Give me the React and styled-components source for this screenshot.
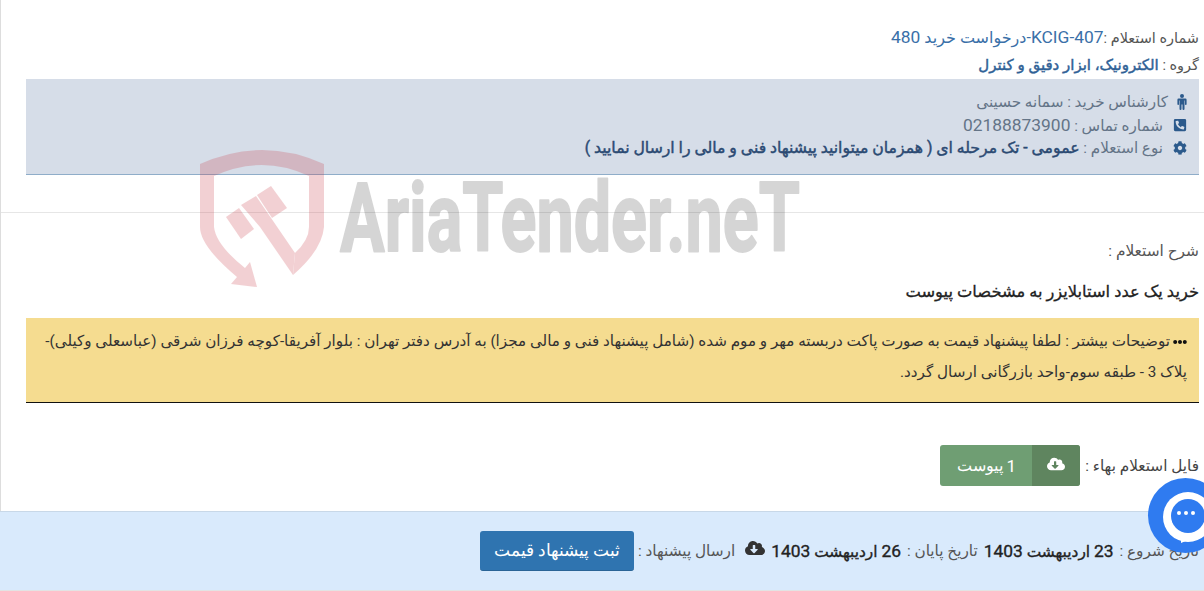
import React from "react";
import styled, { createGlobalStyle } from "styled-components";
import { FaPhoneSquareAlt, FaCog, FaEllipsisH, FaCloudDownloadAlt } from "react-icons/fa";

const Global = createGlobalStyle`
  html, body { margin: 0; padding: 0; background: #fff; }
  body { font-family: Roboto, "Noto Sans", "DejaVu Sans", sans-serif; color: #333; font-size: 14px; }
`;

const Page = styled.div`
  position: relative;
  width: 1204px;
  height: 591px;
  overflow: hidden;
  direction: rtl;
  box-sizing: border-box;
`;

const Upper = styled.div`
  height: 511px;
  box-sizing: border-box;
  border-left: 1px solid #ddd;
  padding-top: 23px;
  display: flex;
  flex-direction: column;
`;

const Section = styled.div`
  padding: 0 5px 0 0;
  margin-left: 25px;
`;

const TitleRow = styled.div`
  height: ${(p) => p.$h || 29}px;
  line-height: ${(p) => (p.$h || 29) - 1}px;
  font-size: 14.5px;
  color: #555;
  white-space: nowrap;
`;

const TitleLink = styled.span`
  font-size: 16px;
  color: #3a70a8;
`;

const Num = styled.span`
  font-size: ${(p) => p.$size || 17.4}px;
  font-weight: ${(p) => p.$weight || 400};
`;

const GroupLink = styled.span`
  font-size: 15px;
  color: #2f6196;
  -webkit-text-stroke: 0.45px #2f6196;
`;

const Band = styled.div`
  height: 96px;
  background: #d6dde8;
  border-bottom: 1px solid #8fadc9;
  box-sizing: border-box;
  padding: 11px 12px 0 0;
`;

const InfoRow = styled.div`
  display: flex;
  align-items: center;
  gap: ${(p) => p.$gap || 10}px;
  height: 23px;
  font-size: 15.2px;
  color: #647487;
  white-space: nowrap;
  svg { color: #2c5a8c; width: 14px; height: 14px; flex: none; }
`;

const Strong = styled.span`
  font-size: 15.7px;
  color: #2b4a73;
  -webkit-text-stroke: 0.45px #2b4a73;
`;

const Rule = styled.hr`
  margin: 37px 0 0;
  border: 0;
  border-top: 1px solid #e6e6e6;
`;

const DescLabel = styled.div`
  margin-top: 28px;
  padding-right: 5px;
  font-size: 15.4px;
  line-height: 20px;
  color: #555;
`;

const DescTitle = styled.div`
  margin-top: 21px;
  padding-right: 5px;
  font-size: 16.3px;
  line-height: 20px;
  color: #222;
  -webkit-text-stroke: 0.3px #222;
`;

const Note = styled.div`
  margin-top: 16px;
  height: 85px;
  box-sizing: border-box;
  background: #f5dc90;
  border-bottom: 1px solid #111;
  padding: 8px 12px 0 12px;
  font-size: 15.2px;
  line-height: 31px;
  color: #333;
  svg { width: 14px; height: 14px; vertical-align: -3px; margin-left: 3px; color: #111; }
`;

const FileRow = styled.div`
  display: flex;
  align-items: center;
  gap: 5px;
  margin-top: 42px;
  padding-right: 5px;
  font-size: 15.3px;
  color: #444;
`;

const AttachButton = styled.button`
  display: flex;
  align-items: stretch;
  direction: rtl;
  width: 140px;
  height: 41px;
  padding: 0;
  border: 0;
  border-radius: 3px;
  overflow: hidden;
  background: #6f9e73;
  color: #fff;
  font: 400 16px Roboto, "Noto Sans", sans-serif;
`;

const AttachIcon = styled.span`
  display: flex;
  align-items: center;
  justify-content: center;
  width: 48px;
  background: #5f855f;
  svg { width: 18px; height: 18px; margin-top: -4px; }
`;

const AttachText = styled.span`
  flex: 1;
  display: flex;
  align-items: center;
  justify-content: center;
`;

const Footer = styled.div`
  height: 80px;
  box-sizing: border-box;
  background: #d9eafc;
  border-top: 1px solid #c8d8e8;
  border-bottom: 1px solid #e3e3e3;
  display: flex;
  align-items: center;
  gap: 6px;
  padding: 0 5px 0 0;
  font-size: 15.3px;
  color: #555;
  white-space: nowrap;
`;

const FooterDate = styled.span`
  font-size: 15.4px;
  color: #222;
  -webkit-text-stroke: 0.35px #222;
`;

const Cloud = styled(FaCloudDownloadAlt)`
  width: 20px;
  height: 20px;
  color: #333;
  margin-left: 4px;
  margin-top: -6px;
`;

const SubmitButton = styled.button`
  height: 40px;
  width: 154px;
  margin-right: -2px;
  border: 0;
  border-bottom: 1px solid #2a6496;
  border-radius: 3px;
  background: #2f74b0;
  color: #fff;
  font: 400 16.6px Roboto, "Noto Sans", sans-serif;
`;

const Watermark = styled.svg`
  position: absolute;
  left: 195px;
  top: 145px;
  width: 820px;
  height: 150px;
  pointer-events: none;
  direction: ltr;
`;

const WatermarkWord = styled.text`
  font-family: Roboto, sans-serif;
  font-weight: 700;
  font-size: 96px;
  fill: #000;
  stroke: #000;
  stroke-width: 2px;
  stroke-linejoin: round;
  opacity: 0.16;
`;

const Chat = styled.div`
  position: absolute;
  left: 1148px;
  top: 478px;
  width: 75px;
  height: 75px;
  border-radius: 50%;
  background: #2f7bf0;
`;

const ChatGlyph = styled.svg`
  display: block;
  width: 75px;
  height: 75px;
`;

const Male = (
  <svg viewBox="0 0 10 16" style={{ width: 10, height: 16 }} fill="currentColor">
    <circle cx="5" cy="2" r="2" />
    <path d="M1.6 4.6h6.8a1.2 1.2 0 0 1 1.2 1.2v4.4a.8.8 0 0 1-1.6 0V6.6h-.5V15a1 1 0 0 1-2 0v-4.6h-1V15a1 1 0 0 1-2 0V6.6H2v3.6a.8.8 0 0 1-1.6 0V5.8a1.2 1.2 0 0 1 1.2-1.2z" />
  </svg>
);

export default function App() {
  return (
    <Page>
      <Global />
      <Upper>
        <Section>
          <TitleRow>
            شماره استعلام :<TitleLink><Num>KCIG-407</Num>-درخواست خرید <Num>480</Num></TitleLink>
          </TitleRow>
          <TitleRow $h={27}>
            گروه : <GroupLink>الکترونیک، ابزار دقیق و کنترل</GroupLink>
          </TitleRow>
          <Band>
            <InfoRow $gap={9}>{Male}<span>کارشناس خرید : سمانه حسینی</span></InfoRow>
            <InfoRow><FaPhoneSquareAlt /><span>شماره تماس : <Num>02188873900</Num></span></InfoRow>
            <InfoRow><FaCog /><span>نوع استعلام : <Strong>عمومی - تک مرحله ای ( همزمان میتوانید پیشنهاد فنی و مالی را ارسال نمایید )</Strong></span></InfoRow>
          </Band>
        </Section>
        <Rule />
        <DescLabel>شرح استعلام :</DescLabel>
        <DescTitle>خرید یک عدد استابلایزر به مشخصات پیوست</DescTitle>
        <Section>
          <Note>
            <FaEllipsisH />
            توضیحات بیشتر : لطفا پیشنهاد قیمت به صورت پاکت دربسته مهر و موم شده (شامل پیشنهاد فنی و مالی مجزا) به آدرس دفتر تهران : بلوار آفریقا-کوچه فرزان شرقی (عباسعلی وکیلی)- پلاک 3 - طبقه سوم-واحد بازرگانی ارسال گردد.
          </Note>
        </Section>
        <FileRow>
          <span>فایل استعلام بهاء :</span>
          <AttachButton>
            <AttachIcon><FaCloudDownloadAlt /></AttachIcon>
            <AttachText><Num $size={17}>1</Num>&nbsp;پیوست</AttachText>
          </AttachButton>
        </FileRow>
      </Upper>
      <Footer>
        <span>تاریخ شروع :</span>
        <FooterDate><Num>23</Num> اردیبهشت <Num>1403</Num></FooterDate>
        <span>تاریخ پایان :</span>
        <FooterDate><Num>26</Num> اردیبهشت <Num>1403</Num></FooterDate>
        <Cloud />
        <span>ارسال پیشنهاد :</span>
        <SubmitButton>ثبت پیشنهاد قیمت</SubmitButton>
      </Footer>
      <Watermark viewBox="195 145 820 150">
        <g fill="#c8303c" opacity="0.22">
          <path fillRule="evenodd" d="M200 164 Q262 136 324 164 V227 Q322 250 293 275 L295 253 Q309 240 309 227 V176 Q262 154 214 176 V227 Q216 245 245 268 L250 262 L257 287 L231 284 L237 277 Q200 246 200 227 Z" />
          <path d="M241 205 L256 196 L295 253 L293 275 L260 227 Z" />
          <path d="M226 217 L239 208 L254 229 L241 239 Z" />
          <path d="M271 186 L287 208 L272 218 L257 195 Z" />
        </g>
        <WatermarkWord x="340" y="251" textLength="460" lengthAdjust="spacingAndGlyphs">AriaTender.neT</WatermarkWord>
      </Watermark>
      <Chat>
        <ChatGlyph viewBox="0 0 75 75">
          <circle cx="40" cy="39" r="25" fill="#fff" />
          <path d="M33 50V65L54 56Z" fill="#fff" />
          <circle cx="40" cy="38" r="17" fill="#2f7bf0" />
          <circle cx="31" cy="35" r="2" fill="#fff" />
          <circle cx="38" cy="35" r="2" fill="#fff" />
          <circle cx="45" cy="35" r="2" fill="#fff" />
        </ChatGlyph>
      </Chat>
    </Page>
  );
}
